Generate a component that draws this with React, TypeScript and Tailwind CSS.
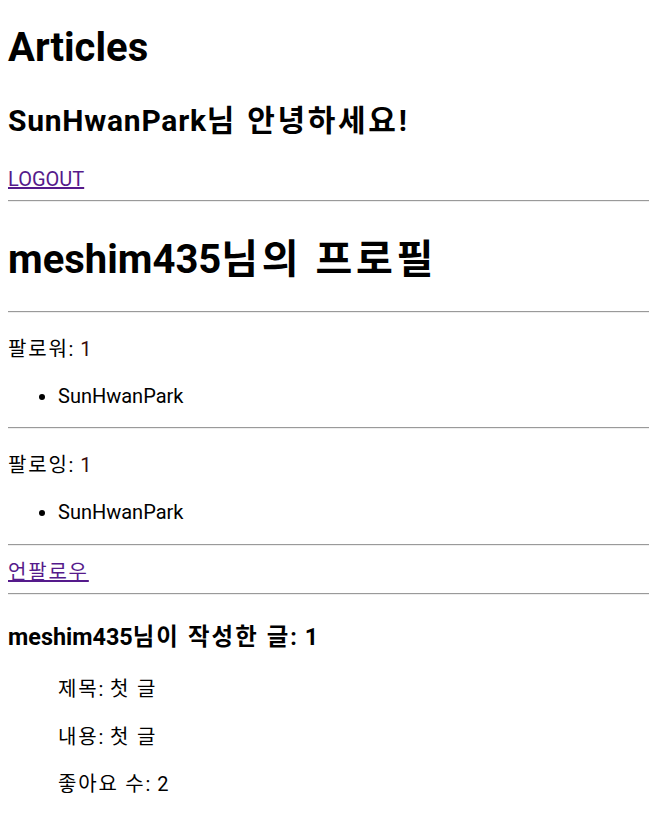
import React from "react";

const font = { fontFamily: 'Roboto, "Noto Sans CJK KR", sans-serif' };

function Hr({ className }: { className: string }) {
  return <div className={`h-0 border-t border-b border-t-[#9a9a9a] border-b-[#eeeeee] ${className}`} />;
}

function K({ children }: { children: React.ReactNode }) {
  return <span className="tracking-[0.09em]">{children}</span>;
}

export default function App() {
  return (
    <div className="bg-white text-black pl-[8px] pt-[24px] pb-[10px] text-[20px] leading-[26px]" style={font}>
      <h1 className="text-[40px] leading-[48px] font-bold">Articles</h1>
      <h2 className="mt-[31px] text-[30px] leading-[36px] font-bold">
        <span className="tracking-[0.025em]">SunHwanPark</span>
        <K>님 안녕하세요!</K>
      </h2>
      <div className="mt-[27px]">
        <a href="#" className="text-[#551a8b] underline">LOGOUT</a>
      </div>
      <Hr className="mt-[8px]" />
      <h1 className="mt-[34px] text-[40px] leading-[48px] font-bold">
        meshim435<K>님의 프로필</K>
      </h1>
      <Hr className="mt-[27px]" />
      <p className="mt-[23px]">
        <K>팔로워:</K> <span className="text-[#3a0a0a]">1</span>
      </p>
      <ul className="mt-[21px] list-disc pl-[50px]">
        <li>SunHwanPark</li>
      </ul>
      <Hr className="mt-[18px]" />
      <p className="mt-[23px]">
        <K>팔로잉:</K> <span className="text-[#3a0a0a]">1</span>
      </p>
      <ul className="mt-[21px] list-disc pl-[50px]">
        <li>SunHwanPark</li>
      </ul>
      <Hr className="mt-[19px]" />
      <div className="mt-[13px]">
        <a href="#" className="text-[#551a8b] underline">
          <K>언팔로우</K>
        </a>
      </div>
      <Hr className="mt-[8px]" />
      <h3 className="mt-[28px] text-[23.4px] leading-[28px] font-bold">
        meshim435<K>님이 작성한 글:</K> 1
      </h3>
      <div className="pl-[50px]">
        <p className="mt-[25px]">
          <K>제목:</K> <K>첫 글</K>
        </p>
        <p className="mt-[22px]">
          <K>내용:</K> <K>첫 글</K>
        </p>
        <p className="mt-[21px]">
          <K>좋아요 수:</K> 2
        </p>
      </div>
    </div>
  );
}
